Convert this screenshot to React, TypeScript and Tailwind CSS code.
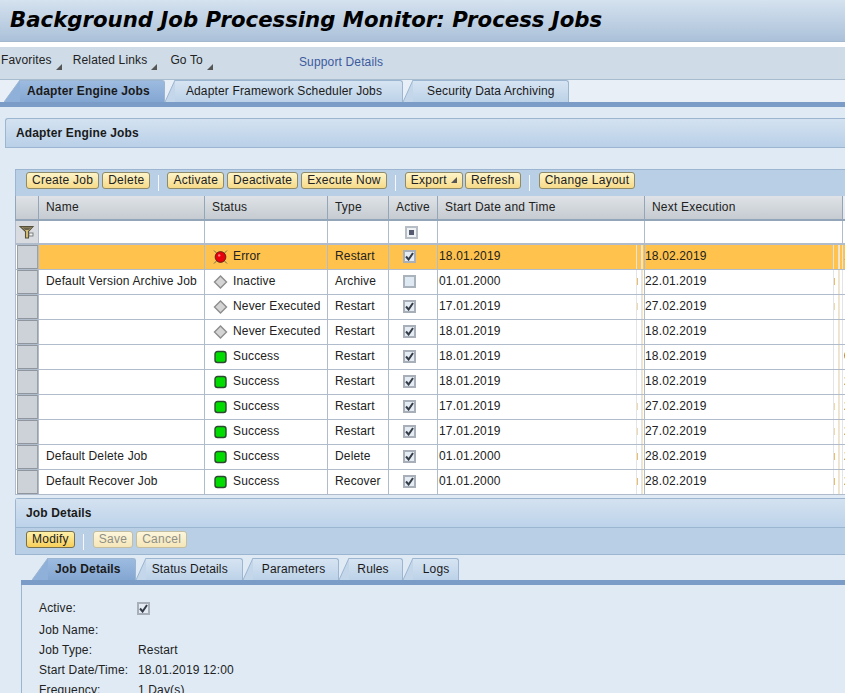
import type { ReactNode } from "react";

const font = "font-['Liberation_Sans',Arial,sans-serif]";

const cols = "grid grid-cols-[24px_166px_123px_61px_49px_207px_198px_200px]";

type Job = { name: string; status: "error" | "off" | "ok"; label: string; type: string; active: boolean; start: string; next: string; tail: string };

const jobs: Job[] = [
  { name: "", status: "error", label: "Error", type: "Restart", active: true, start: "18.01.2019", next: "18.02.2019", tail: "1" },
  { name: "Default Version Archive Job", status: "off", label: "Inactive", type: "Archive", active: false, start: "01.01.2000", next: "22.01.2019", tail: "" },
  { name: "", status: "off", label: "Never Executed", type: "Restart", active: true, start: "17.01.2019", next: "27.02.2019", tail: "" },
  { name: "", status: "off", label: "Never Executed", type: "Restart", active: true, start: "18.01.2019", next: "18.02.2019", tail: "" },
  { name: "", status: "ok", label: "Success", type: "Restart", active: true, start: "18.01.2019", next: "18.02.2019", tail: "0" },
  { name: "", status: "ok", label: "Success", type: "Restart", active: true, start: "18.01.2019", next: "18.02.2019", tail: "2" },
  { name: "", status: "ok", label: "Success", type: "Restart", active: true, start: "17.01.2019", next: "27.02.2019", tail: "2" },
  { name: "", status: "ok", label: "Success", type: "Restart", active: true, start: "17.01.2019", next: "27.02.2019", tail: "2" },
  { name: "Default Delete Job", status: "ok", label: "Success", type: "Delete", active: true, start: "01.01.2000", next: "28.02.2019", tail: "2" },
  { name: "Default Recover Job", status: "ok", label: "Success", type: "Recover", active: true, start: "01.01.2000", next: "28.02.2019", tail: "2" },
];

function Caret() {
  return <span className="inline-block h-0 w-0 border-b-[6px] border-l-[6px] border-b-[#555] border-l-transparent" />;
}

function Btn({ children, off, caret, dark }: { children: ReactNode; off?: boolean; caret?: boolean; dark?: boolean }) {
  return (
    <button
      className={`flex h-[17px] items-center gap-[4px] rounded-[3px] border px-[5px] pb-px text-[12px] leading-none tracking-[0.25px] ${
        off
          ? "border-[#c4bea0] bg-gradient-to-b from-[#fdf6dc] to-[#f5e6b8] text-[#8f8f85]"
          : dark
            ? "border-[#77704e] bg-gradient-to-b from-[#fdf0a8] to-[#f8cf58] text-[#222]"
            : "border-[#8f8a68] bg-gradient-to-b from-[#fdf4c8] to-[#f6da88] text-[#222]"
      }`}
    >
      {children}
      {caret && <Caret />}
    </button>
  );
}

function Sep() {
  return <div className="mx-[8px] mt-[3px] h-[16px] w-px bg-[#f4f8fc]" />;
}

function Tab({ label, active, slant, pad }: { label: string; active?: boolean; slant: number; pad: string }) {
  const fill = active ? "#8fb0d8" : "#c4d7ea";
  const h = 22;
  return (
    <div className="flex h-[22px]">
      <svg width={slant} height={h} className="block shrink-0">
        <path d={`M0 ${h} L${slant} 0 V${h} Z`} fill={fill} />
        <path d={`M0 ${h} L${slant} 0`} stroke="#9cb5d0" fill="none" />
      </svg>
      <div
        className={`flex items-center rounded-tr-[3px] border-t border-r border-[#9cb5d0] pb-px text-[12px] tracking-[0.15px] text-[#1a1a1a] ${
          active ? "bg-gradient-to-b from-[#9dbbe0] to-[#83a6d2] font-bold" : "bg-gradient-to-b from-[#d6e4f2] to-[#bcd2e8]"
        } ${pad}`}
      >
        {label}
      </div>
    </div>
  );
}

function Check({ state }: { state: "on" | "off" | "mixed" }) {
  return (
    <span
      className={`flex h-[13px] w-[13px] items-center justify-center border-2 ${
        state === "mixed" ? "border-[#b8bec6] bg-[#f0f3f6]" : state === "off" ? "border-[#aab2bc] bg-[#dfe9f4]" : "border-[#a8afb8] bg-[#e6ecf3]"
      }`}
    >
      {state === "on" && (
        <svg width="9" height="9" viewBox="0 0 9 9" className="shrink-0">
          <path d="M1 4.5 L3.6 7.5 L8 1" fill="none" stroke="#343c48" strokeWidth="2" />
        </svg>
      )}
      {state === "mixed" && <span className="block h-[5px] w-[5px] bg-[#555a6e]" />}
    </span>
  );
}

function StatusIcon({ kind }: { kind: Job["status"] }) {
  if (kind === "error")
    return (
      <svg width="15" height="14" viewBox="0 0 15 14" className="shrink-0">
        <path d="M1 0.5 L14 13.5 M14 0.5 L1 13.5" stroke="#6e6a48" strokeWidth="1" />
        <circle cx="7.5" cy="7" r="5.4" fill="#e8000c" stroke="#4a1a10" strokeWidth="0.8" />
        <circle cx="6.2" cy="5.4" r="1.2" fill="#ff8080" />
      </svg>
    );
  if (kind === "off")
    return (
      <svg width="15" height="14" viewBox="0 0 15 14" className="shrink-0">
        <path d="M7.5 1 L13.5 7 L7.5 13 L1.5 7 Z" fill="#d4d4d4" stroke="#8c8c8c" strokeWidth="1.4" />
      </svg>
    );
  return (
    <svg width="15" height="14" viewBox="0 0 15 14" className="shrink-0">
      <rect x="2" y="1.5" width="11" height="11" rx="2.5" fill="#00dc00" stroke="#2c4a30" strokeWidth="1.4" />
    </svg>
  );
}

function Funnel() {
  return (
    <svg width="16" height="15" viewBox="0 0 16 15">
      <path d="M1 1.5 H14 L9.5 6.5 V13 H6.5 V6.5 Z" fill="#d8c078" stroke="#55503a" strokeWidth="1.1" />
      <path d="M3 2.2 H12.5 L9.5 5 H6 Z" fill="#6a6450" />
      <rect x="10" y="8" width="4" height="3" fill="#f2f2f2" stroke="#666" strokeWidth="0.8" />
    </svg>
  );
}

function HeadCell({ children }: { children?: ReactNode }) {
  return (
    <div className="flex items-center border-r border-b-2 border-[#93a5b8] bg-gradient-to-b from-[#dfe3e7] to-[#c5cbd1] pb-px pl-[7px] text-[12px] tracking-[0.2px] text-[#222] first:border-l last:border-r-0 last:from-[#eceff2] last:to-[#e2e6ea]">
      {children}
    </div>
  );
}

function sliver(value: string) {
  if (["01.01.2000", "22.01.2019", "28.02.2019"].includes(value)) return "h-[7px] bg-[#eebb66]";
  if (["17.01.2019", "27.02.2019"].includes(value)) return "h-[7px] bg-[#f0d8a8]";
  return "h-0";
}

function DateCell({ value, next }: { value: string; next?: boolean }) {
  return (
    <div className={`flex items-center justify-between overflow-hidden border-r ${next ? "border-[#e2e5e8] pr-[2px]" : "border-[#b0bccb] pr-px pl-px"}`}>
      <span className="pb-[2px]">{value}</span>
      <span className="flex h-full">
        <span className="block h-full w-px bg-[#e2e5e8]" />
        <span className="flex h-full w-[4px] items-center pb-[2px]">
          <span className={`block w-px ${sliver(value)}`} />
        </span>
        <span className="block h-full w-px bg-[#e2e5e8]" />
        <span className="block h-full w-px bg-[#fbe6bb]" />
      </span>
    </div>
  );
}

function Row({ job, first }: { job: Job; first: boolean }) {
  return (
    <div className={`${cols} h-[25px] border-b border-[#b0bccb] text-[12px] tracking-[0.15px] text-[#222] ${first ? "bg-[#ffc34d]" : "bg-white"}`}>
      <div className="border-r border-l border-[#b0bccb] bg-white pl-px">
        <div className="h-full w-full border border-t-[#8f969e] border-r-[#9aa1a9] border-b-[#8f969e] border-l-[#9aa1a9] bg-[#cdd2d8]" />
      </div>
      <div className="flex items-center border-r border-[#b0bccb] pb-[2px] pl-[7px]">{job.name}</div>
      <div className="flex items-center gap-[5px] border-r border-[#b0bccb] pb-px pl-[8px]">
        <StatusIcon kind={job.status} />
        <span className="pb-px">{job.label}</span>
      </div>
      <div className="flex items-center border-r border-[#b0bccb] pb-[2px] pl-[7px]">{job.type}</div>
      <div className="flex items-center border-r border-[#b0bccb] pb-px pl-[14px]">
        <Check state={job.active ? "on" : "off"} />
      </div>
      <DateCell value={job.start} />
      <DateCell value={job.next} next />
      <div className="flex items-center overflow-hidden pb-[2px] pl-px">{job.tail}</div>
    </div>
  );
}

function JobTable() {
  return (
    <div className="w-[1100px]">
      <div className="flex h-[27px] border-t border-l border-[#9cb5d0] bg-[#b9cfe6] pt-[2px] pl-[10px]">
        <div className="flex gap-[3px]">
          <Btn>Create Job</Btn>
          <Btn>Delete</Btn>
        </div>
        <Sep />
        <div className="flex gap-[3px]">
          <Btn>Activate</Btn>
          <Btn>Deactivate</Btn>
          <Btn>Execute Now</Btn>
        </div>
        <Sep />
        <div className="ml-px flex gap-[2px]">
          <Btn caret>Export</Btn>
          <Btn>Refresh</Btn>
        </div>
        <Sep />
        <div className="ml-px">
          <Btn>Change Layout</Btn>
        </div>
      </div>
      <div className={`${cols} h-[25px]`}>
        <HeadCell />
        <HeadCell>Name</HeadCell>
        <HeadCell>Status</HeadCell>
        <HeadCell>Type</HeadCell>
        <HeadCell>Active</HeadCell>
        <HeadCell>Start Date and Time</HeadCell>
        <HeadCell>Next Execution</HeadCell>
        <HeadCell />
      </div>
      <div className={`${cols} h-[24px] border-b-[2px] border-[#b0bccb] bg-white`}>
        <div className="flex items-center justify-center border-r border-l border-[#b0bccb] bg-[#d8dce1]">
          <Funnel />
        </div>
        <div className="border-r border-[#b0bccb]" />
        <div className="border-r border-[#b0bccb]" />
        <div className="border-r border-[#b0bccb]" />
        <div className="flex items-center border-r border-[#b0bccb] pl-[16px]">
          <Check state="mixed" />
        </div>
        <div className="border-r border-[#b0bccb]" />
        <div className="border-r border-[#b0bccb]" />
        <div />
      </div>
      {jobs.map((job, i) => (
        <Row key={i} job={job} first={i === 0} />
      ))}
    </div>
  );
}

function Field({ label, children, className }: { label: string; children?: ReactNode; className?: string }) {
  return (
    <div className={`flex items-center text-[12px] tracking-[0.15px] text-[#222] ${className ?? ""}`}>
      <div className="w-[99px]">{label}</div>
      <div>{children}</div>
    </div>
  );
}

export default function App() {
  return (
    <div className={`${font} h-[693px] w-[845px] overflow-hidden bg-[#dfeaf5]`}>
      <div className="flex h-[42px] items-center whitespace-nowrap border-b border-[#a3b8ce] bg-gradient-to-b from-[#d5e2ef] to-[#abc1d9] pb-[2px] pl-[10px]">
        <h1 className="font-['DejaVu_Sans',Verdana,sans-serif] text-[21.25px] font-bold italic text-black">Background Job Processing Monitor: Process Jobs</h1>
      </div>
      <div className="h-[5px] bg-white" />
      <div className="flex h-[32px] items-start bg-[#cfdce7] pt-[4px] text-[12px] tracking-[0.15px] text-[#222]">
        <div className="flex items-start gap-[4px] pl-px">
          Favorites
          <span className="mt-[13px] flex"><Caret /></span>
        </div>
        <div className="ml-[11px] flex items-start gap-[4px]">
          Related Links
          <span className="mt-[13px] flex"><Caret /></span>
        </div>
        <div className="ml-[13px] flex items-start gap-[4px]">
          Go To
          <span className="mt-[13px] flex"><Caret /></span>
        </div>
        <a className="mt-[2px] ml-[86px] text-[#3d5a9e]">Support Details</a>
      </div>
      <div className="flex h-[23px] items-end border-t border-[#a9bccf] bg-[#e8eff7] pl-[4px]">
        <Tab label="Adapter Engine Jobs" active slant={16} pad="pl-[7px] pr-[14px]" />
        <Tab label="Adapter Framework Scheduler Jobs" slant={10} pad="pl-[11px] pr-[20px]" />
        <Tab label="Security Data Archiving" slant={10} pad="pl-[14px] pr-[13px]" />
      </div>
      <div className="h-[5px] bg-[#7a9cc6]" />

      <div className="pt-[11px] pl-[5px]">
        <div className="flex h-[30px] w-[900px] items-center rounded-tl-[3px] border-t border-b border-l border-[#9cb5d0] bg-gradient-to-b from-[#d4e2f0] to-[#b9d0e8] pl-[10px] text-[12px] font-bold tracking-[0.15px] text-[#1a1a1a]">
          Adapter Engine Jobs
        </div>
      </div>

      <div className="pt-[21px] pl-[15px]">
        <JobTable />
      </div>

      <div className="pt-[3px] pl-[15px]">
        <div className="w-[900px] rounded-tl-[3px] border-t border-b border-l border-[#9cb5d0]">
          <div className="flex h-[29px] items-center border-b border-[#9cb5d0] bg-gradient-to-b from-[#d4e2f0] to-[#bdd3ea] pl-[10px] text-[12px] font-bold tracking-[0.15px] text-[#1a1a1a]">
            Job Details
          </div>
          <div className="flex h-[26px] bg-[#b9cfe6] pt-[3px] pl-[10px]">
            <Btn dark>Modify</Btn>
            <Sep />
            <div className="ml-px flex gap-[3px]">
              <Btn off>Save</Btn>
              <Btn off>Cancel</Btn>
            </div>
          </div>
        </div>
        <div className="ml-[6px] pt-[3px]">
          <div className="flex h-[22px] pl-[11px]">
            <Tab label="Job Details" active slant={16} pad="pl-[7px] pr-[14px]" />
            <Tab label="Status Details" slant={10} pad="pl-[6px] pr-[14px]" />
            <Tab label="Parameters" slant={10} pad="pl-[9px] pr-[13px]" />
            <Tab label="Rules" slant={10} pad="pl-[8px] pr-[13px]" />
            <Tab label="Logs" slant={10} pad="pl-[10px] pr-[9px]" />
          </div>
          <div className="h-[5px] w-[900px] bg-[#7a9cc6]" />
          <div className="w-[900px] border-l border-[#9cb5d0] pt-[14px] pl-[17px]">
            <Field label="Active:" className="h-[18px]">
              <span className="-ml-px block"><Check state="on" /></span>
            </Field>
            <Field label="Job Name:" className="mt-[3px] h-[20px]" />
            <Field label="Job Type:" className="h-[20px]">Restart</Field>
            <Field label="Start Date/Time:" className="h-[20px]">18.01.2019 12:00</Field>
            <Field label="Frequency:" className="h-[20px]">1 Day(s)</Field>
          </div>
        </div>
      </div>
    </div>
  );
}
